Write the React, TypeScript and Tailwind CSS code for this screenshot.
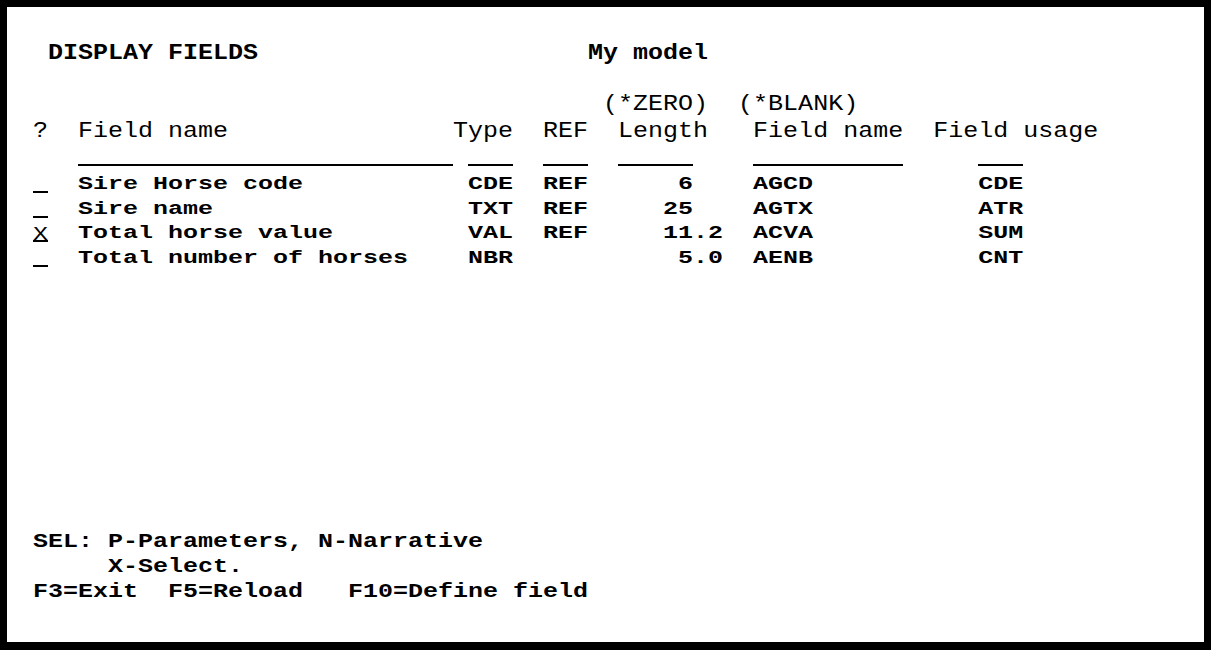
import React from 'react';

// builds a fixed-width terminal line: each part is [column, text]
function at(parts: [number, string][]) {
  let line = '';
  for (const [col, text] of parts) {
    line = line.padEnd(col, ' ') + text;
  }
  return line;
}

const rows = [
  { sel: '', name: 'Sire Horse code', type: 'CDE', ref: 'REF', len: '6', lenCol: 43, fld: 'AGCD', usage: 'CDE' },
  { sel: '', name: 'Sire name', type: 'TXT', ref: 'REF', len: '25', lenCol: 42, fld: 'AGTX', usage: 'ATR' },
  { sel: 'X', name: 'Total horse value', type: 'VAL', ref: 'REF', len: '11.2', lenCol: 42, fld: 'ACVA', usage: 'SUM' },
  { sel: '', name: 'Total number of horses', type: 'NBR', ref: '', len: '5.0', lenCol: 43, fld: 'AENB', usage: 'CNT' },
];

function Line({ text, bold, scale }: { text: string; bold?: boolean; scale: 'lg' | 'md' | 'sm' }) {
  return (
    <div
      className={
        'h-[25px] whitespace-pre leading-[25px] origin-top ' +
        (bold ? 'font-bold ' : 'font-normal ') +
        (scale === 'lg' ? 'scale-y-[0.9]' : scale === 'md' ? 'scale-y-[0.82]' : 'scale-y-[0.72]')
      }
    >
      {text}
    </div>
  );
}

export default function App() {
  return (
    <div className="w-[1211px] h-[650px] bg-white border-[7px] border-b-[8px] border-black text-black font-['Liberation_Mono',monospace] text-[25px] overflow-hidden">
      <div className="pl-[26px] pt-[35px]">
        <Line bold scale="lg" text={at([[1, 'DISPLAY FIELDS'], [37, 'My model']])} />

        <div className="mt-[26px]">
          <Line scale="lg" text={at([[38, '(*ZERO)'], [47, '(*BLANK)']])} />
        </div>
        <div className="mt-[2px]">
          <Line
            scale="lg"
            text={at([[0, '?'], [3, 'Field name'], [28, 'Type'], [34, 'REF'], [39, 'Length'], [48, 'Field name'], [60, 'Field usage']])}
          />
        </div>

        {/* column heading underlines */}
        <div className="mt-[19px] flex h-[2px]">
          <div className="ml-[45px] w-[375px] bg-black" />
          <div className="ml-[15px] w-[45px] bg-black" />
          <div className="ml-[30px] w-[45px] bg-black" />
          <div className="ml-[30px] w-[75px] bg-black" />
          <div className="ml-[60px] w-[150px] bg-black" />
          <div className="ml-[75px] w-[45px] bg-black" />
        </div>

        <div className="mt-[9px] flex flex-col">
          {rows.map((r) => (
            <div key={r.name} className="flex h-[24.5px]">
              <div className="w-[15px] h-[18px] border-b-2 border-black shrink-0">
                <Line scale="md" text={r.sel} />
              </div>
              <div className="ml-[30px]">
                <Line
                  bold
                  scale="sm"
                  text={at([[0, r.name], [26, r.type], [31, r.ref], [r.lenCol - 3, r.len], [45, r.fld], [60, r.usage]])}
                />
              </div>
            </div>
          ))}
        </div>

        <div className="mt-[258px]">
          <Line bold scale="md" text="SEL: P-Parameters, N-Narrative" />
          <Line bold scale="md" text="     X-Select." />
          <Line bold scale="md" text="F3=Exit  F5=Reload   F10=Define field" />
        </div>
      </div>
    </div>
  );
}
